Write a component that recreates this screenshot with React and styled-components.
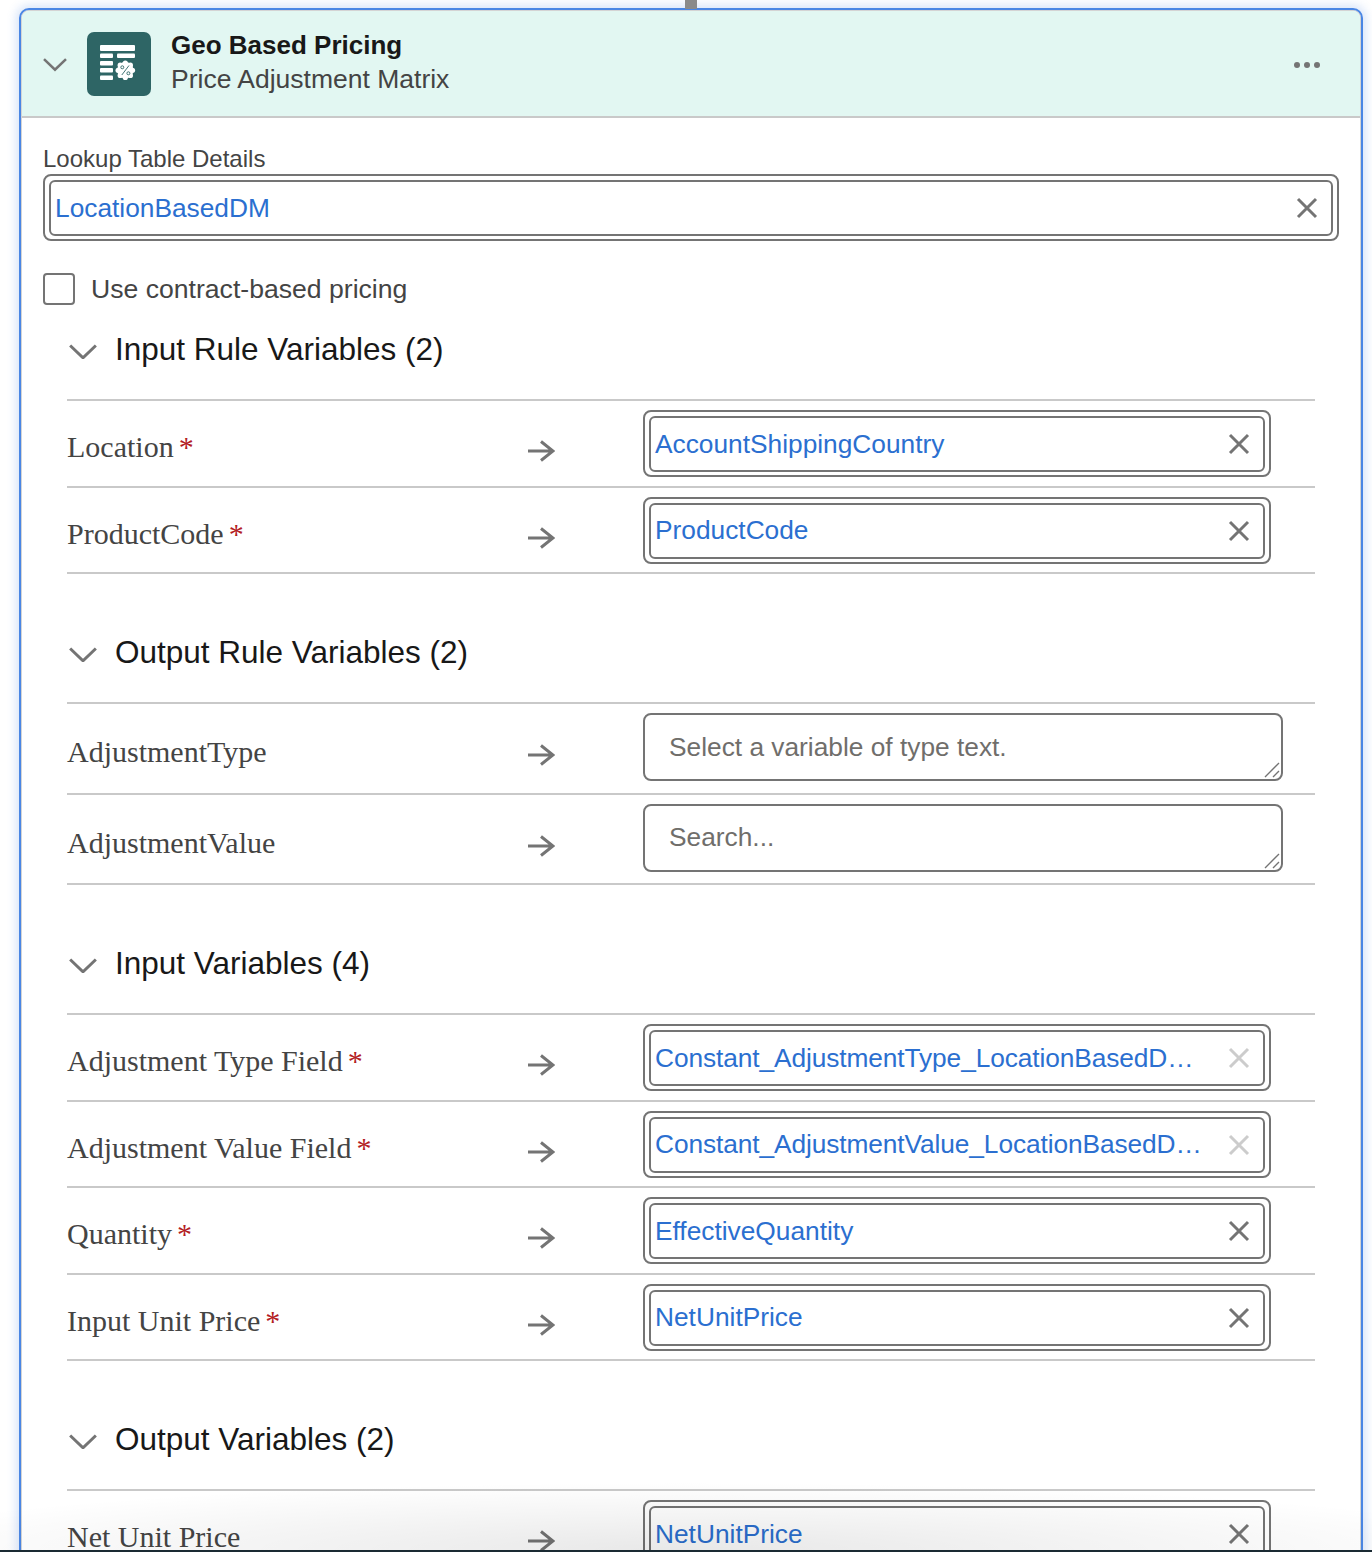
import React from "react";
import styled, { createGlobalStyle } from "styled-components";

const sections = [
  {
    title: "Input Rule Variables (2)",
    rows: [
      { label: "Location", required: true, value: "AccountShippingCountry" },
      { label: "ProductCode", required: true, value: "ProductCode" },
    ],
  },
  {
    title: "Output Rule Variables (2)",
    rows: [
      { label: "AdjustmentType", placeholder: "Select a variable of type text." },
      { label: "AdjustmentValue", placeholder: "Search..." },
    ],
  },
  {
    title: "Input Variables (4)",
    rows: [
      { label: "Adjustment Type Field", required: true, value: "Constant_AdjustmentType_LocationBasedD…", muted: true },
      { label: "Adjustment Value Field", required: true, value: "Constant_AdjustmentValue_LocationBasedD…", muted: true },
      { label: "Quantity", required: true, value: "EffectiveQuantity" },
      { label: "Input Unit Price", required: true, value: "NetUnitPrice" },
    ],
  },
  {
    title: "Output Variables (2)",
    rows: [{ label: "Net Unit Price", value: "NetUnitPrice" }],
  },
];

const Chevron = ({ size = 28 }) => (
  <svg width={size} height={size * 0.6} viewBox="0 0 28 17" fill="none">
    <path d="M1 2.5 14 15 27 2.5" stroke="#747474" strokeWidth="3" />
  </svg>
);

const CloseIcon = ({ color = "#747474" }) => (
  <svg width="22" height="22" viewBox="0 0 22 22" fill="none">
    <path d="M2 2 20 20M20 2 2 20" stroke={color} strokeWidth="3" />
  </svg>
);

const ArrowIcon = () => (
  <svg width="28" height="22" viewBox="0 0 28 22" fill="none">
    <path d="M1 11H26M14 1.5 26 11 14 20.5" stroke="#747474" strokeWidth="3" />
  </svg>
);

const badgeBumps = [0, 45, 90, 135, 180, 225, 270, 315];

const TableIcon = () => (
  <svg width="64" height="64" viewBox="0 0 64 64">
    <rect width="64" height="64" rx="7" fill="#2e6565" />
    <g fill="#fff">
      <rect x="13" y="13" width="35" height="6" rx="1" />
      <rect x="13" y="21.5" width="13" height="4.5" rx="1" />
      <rect x="30" y="21.5" width="18" height="4.5" rx="1" />
      <rect x="13" y="29" width="13" height="4.5" rx="1" />
      <rect x="13" y="36" width="13" height="4.5" rx="1" />
      <rect x="13" y="43.5" width="13" height="4.5" rx="1" />
    </g>
    <circle cx="38.3" cy="38.3" r="10.8" fill="#2e6565" />
    <g fill="#fff">
      <circle cx="38.3" cy="38.3" r="8.2" />
      {badgeBumps.map((deg) => (
        <circle
          key={deg}
          cx={38.3 + 7.2 * Math.cos((deg * Math.PI) / 180)}
          cy={38.3 + 7.2 * Math.sin((deg * Math.PI) / 180)}
          r="2.6"
        />
      ))}
    </g>
    <g fill="none" stroke="#2e6565" strokeWidth="0.9">
      <path d="M42 33.5 34.8 43" />
      <circle cx="35.3" cy="35.3" r="1.5" />
      <circle cx="41.4" cy="41.3" r="1.5" />
    </g>
  </svg>
);

const ResizeGrip = () => (
  <svg width="16" height="16" viewBox="0 0 16 16" fill="none">
    <path d="M1 15 15 1M9 15 15 9" stroke="#747474" strokeWidth="1.4" />
  </svg>
);

function Lookup({ value, muted }) {
  return (
    <LookupOuter>
      <LookupInner>
        <LookupText $tight={muted}>{value}</LookupText>
        <CloseIcon color={muted ? "#cccccc" : "#747474"} />
      </LookupInner>
    </LookupOuter>
  );
}

export default function App() {
  return (
    <Page>
      <GlobalStyle />
      <Connector />
      <Card>
        <Header>
          <Chevron size={24} />
          <TableIcon />
          <Titles>
            <Title>Geo Based Pricing</Title>
            <Subtitle>Price Adjustment Matrix</Subtitle>
          </Titles>
          <Dots>
            <i />
            <i />
            <i />
          </Dots>
        </Header>
        <Body>
          <FieldLabel>Lookup Table Details</FieldLabel>
          <Lookup value="LocationBasedDM" />
          <CheckRow>
            <CheckBox />
            <CheckText>Use contract-based pricing</CheckText>
          </CheckRow>
          {sections.map((section) => (
            <Section key={section.title}>
              <SectionHead>
                <Chevron />
                <SectionTitle>{section.title}</SectionTitle>
              </SectionHead>
              <Rows>
                {section.rows.map((row) => (
                  <Row key={row.label} $tall={!!row.placeholder}>
                    <RowLabel $tall={!!row.placeholder}>
                      {row.label}
                      {row.required && <Required>*</Required>}
                    </RowLabel>
                    <RowArrow $tall={!!row.placeholder}>
                      <ArrowIcon />
                    </RowArrow>
                    {row.placeholder ? (
                      <TextBox>
                        {row.placeholder}
                        <Grip>
                          <ResizeGrip />
                        </Grip>
                      </TextBox>
                    ) : (
                      <RowField>
                        <Lookup value={row.value} muted={row.muted} />
                      </RowField>
                    )}
                  </Row>
                ))}
              </Rows>
            </Section>
          ))}
        </Body>
      </Card>
      <BottomFade />
    </Page>
  );
}

const GlobalStyle = createGlobalStyle`
  html, body {
    margin: 0;
    background: #fff;
  }
  * {
    box-sizing: border-box;
  }
`;

const Page = styled.div`
  position: relative;
  height: 1552px;
  overflow: hidden;
  padding: 8px 9px 0 19px;
  font-family: "Liberation Sans", Arial, sans-serif;
  background: #fff;
`;
const Connector = styled.div`
  position: absolute;
  top: 0;
  left: 685px;
  width: 12px;
  height: 9px;
  background: #8a8a8a;
`;
const Card = styled.div`
  border: 2px solid #4a86e4;
  border-radius: 10px;
  background: #fff;
  box-shadow: 0 0 10px 3px rgba(74, 134, 228, 0.22), inset 0 0 0 1px #d4d4d4;
  padding: 1px;
`;
const Header = styled.div`
  display: flex;
  align-items: center;
  height: 107px;
  padding: 0 40px 0 21px;
  background: #e2f7f2;
  border-bottom: 2px solid #c9c9c9;
  border-radius: 7px 7px 0 0;
  svg:first-child {
    margin: 2px 20px 0 0;
  }
`;
const Titles = styled.div`
  flex: 1;
  margin-left: 20px;
  padding-bottom: 2px;
`;
const Title = styled.div`
  font-size: 26px;
  line-height: 32px;
  font-weight: 700;
  color: #181818;
`;
const Subtitle = styled.div`
  font-size: 26.5px;
  line-height: 36px;
  color: #444;
`;
const Dots = styled.div`
  display: flex;
  gap: 4px;
  margin-top: 2px;
  i {
    width: 6px;
    height: 6px;
    border-radius: 50%;
    background: #747474;
  }
`;
const Body = styled.div`
  padding: 25px 21px 0;
`;
const FieldLabel = styled.div`
  font-size: 24px;
  line-height: 31px;
  color: #444;
`;
const LookupOuter = styled.div`
  border: 2px solid #747474;
  border-radius: 8px;
  padding: 4px 4px 3px;
  background: #fff;
`;
const LookupInner = styled.div`
  display: flex;
  align-items: center;
  justify-content: space-between;
  height: 56px;
  padding: 0 13px 0 4px;
  border: 2px solid #747474;
  border-radius: 6px;
`;
const LookupText = styled.span`
  flex: 1;
  min-width: 0;
  margin-right: 16px;
  white-space: nowrap;
  font-size: 26.3px;
  letter-spacing: ${(p) => (p.$tight ? "-0.1px" : "0")};
  color: #2b6fd0;
`;
const CheckRow = styled.div`
  display: flex;
  align-items: center;
  margin-top: 32px;
`;
const CheckBox = styled.div`
  width: 32px;
  height: 32px;
  border: 2px solid #747474;
  border-radius: 4px;
`;
const CheckText = styled.span`
  margin-left: 16px;
  font-size: 26.6px;
  color: #444;
`;
const Section = styled.section`
  margin: 48px 24px 0;
  &:first-of-type {
    margin-top: 14px;
  }
`;
const SectionHead = styled.div`
  display: flex;
  align-items: center;
  height: 60px;
  margin-bottom: 20px;
  padding-left: 2px;
  svg {
    margin-top: 4px;
  }
`;
const SectionTitle = styled.h3`
  margin: 0 0 0 18px;
  font-size: 31.5px;
  font-weight: 400;
  color: #181818;
`;
const Rows = styled.div`
  border-top: 2px solid #c9c9c9;
`;
const Row = styled.div`
  display: grid;
  grid-template-columns: 460px 116px 1fr;
  height: ${(p) => (p.$tall ? "90.5px" : "86.5px")};
  border-bottom: 2px solid #c9c9c9;
`;
const RowLabel = styled.div`
  padding-top: ${(p) => (p.$tall ? "31px" : "29px")};
  font-family: "Liberation Serif", "Times New Roman", serif;
  font-size: 30px;
  line-height: 34px;
  color: #444;
`;
const Required = styled.span`
  margin-left: 5px;
  color: #b3201f;
`;
const RowArrow = styled.div`
  padding-top: ${(p) => (p.$tall ? "40px" : "39px")};
`;
const RowField = styled.div`
  width: 628px;
  padding-top: 9px;
`;
const TextBox = styled.div`
  position: relative;
  width: 640px;
  height: 68px;
  margin-top: 9px;
  padding: 0 24px;
  display: flex;
  align-items: center;
  border: 2px solid #747474;
  border-radius: 8px;
  font-size: 26.3px;
  color: #706e6b;
`;
const Grip = styled.span`
  position: absolute;
  right: 1px;
  bottom: 1px;
  line-height: 0;
`;
const BottomFade = styled.div`
  position: absolute;
  left: 0;
  right: 0;
  bottom: 0;
  height: 70px;
  border-bottom: 2px solid #1a2a33;
  background: radial-gradient(ellipse 62% 100% at 50% 100%, rgba(0, 0, 0, 0.09), rgba(0, 0, 0, 0));
  pointer-events: none;
`;
